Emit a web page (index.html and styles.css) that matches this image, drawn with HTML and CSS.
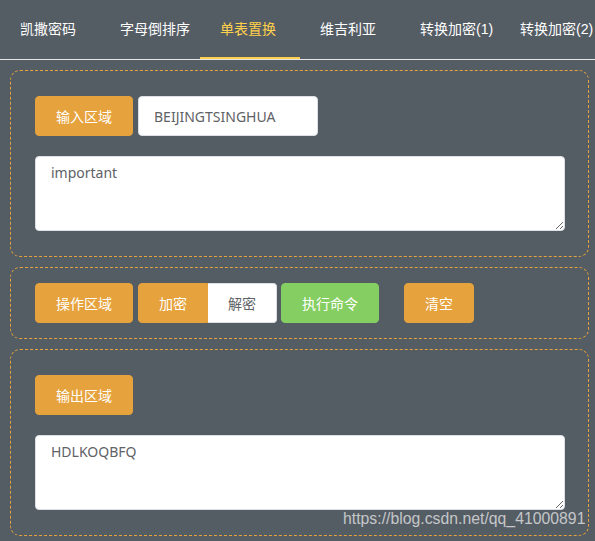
FILE: index.html
```html
<!DOCTYPE html>
<html lang="zh-CN">
<head>
<meta charset="utf-8">
<title>加密</title>
<link rel="stylesheet" href="styles.css">
</head>
<body>
<nav class="menu">
  <div class="tab">凯撒密码</div>
  <div class="tab">字母倒排序</div>
  <div class="tab active">单表置换</div>
  <div class="tab">维吉利亚</div>
  <div class="tab">转换加密(1)</div>
  <div class="tab">转换加密(2)</div>
</nav>
<main class="content">
  <section class="panel">
    <div class="row">
      <button class="btn btn-warning">输入区域</button>
      <input class="input key" type="text" value="BEIJINGTSINGHUA">
    </div>
    <textarea class="textarea">important</textarea>
  </section>
  <section class="panel panel-ops">
    <div class="row">
      <button class="btn btn-warning">操作区域</button>
      <div class="seg">
        <span class="seg-item seg-on">加密</span><span class="seg-item seg-off">解密</span>
      </div>
      <button class="btn btn-success">执行命令</button>
      <button class="btn btn-warning btn-clear">清空</button>
    </div>
  </section>
  <section class="panel">
    <div class="row">
      <button class="btn btn-warning">输出区域</button>
    </div>
    <textarea class="textarea">HDLKOQBFQ</textarea>
  </section>
</main>
<div class="watermark">https://blog.csdn.net/qq_41000891</div>
</body>
</html>
```

FILE: styles.css
```css
html, body {
  margin: 0;
  padding: 0;
  background: #545c64;
  width: 595px;
  height: 541px;
  overflow: hidden;
  font-family: "Liberation Sans", "Noto Sans CJK SC", sans-serif;
}

.menu {
  display: flex;
  height: 59px;
  border-bottom: 1px solid #e6e6e6;
  overflow: hidden;
}

.tab {
  flex: 0 0 100px;
  box-sizing: border-box;
  padding-left: 20px;
  height: 59px;
  line-height: 58px;
  font-size: 14px;
  color: #ffffff;
  white-space: nowrap;
}

.tab.active {
  color: #ffd04b;
  border-bottom: 2px solid #ffd04b;
}

.content {
  padding: 10px 6px 0 10px;
}

.panel {
  box-sizing: border-box;
  border: 1px dashed #e6a23c;
  border-radius: 10px;
  padding: 25px 23px 25px 24px;
  margin-bottom: 10px;
}

.panel-ops {
  padding-top: 15px;
  padding-bottom: 15px;
}

.row {
  display: flex;
  align-items: center;
}

.btn {
  box-sizing: border-box;
  height: 40px;
  padding: 0 20px;
  border-radius: 4px;
  font-family: "Noto Sans CJK SC", sans-serif;
  font-size: 14px;
  color: #ffffff;
  cursor: pointer;
}

.btn-warning {
  background: #e6a23c;
  border: 1px solid #e6a23c;
}

.btn-success {
  background: #85ce61;
  border: 1px solid #85ce61;
  margin-left: 4px;
}

.btn-clear {
  margin-left: 25px;
}

.input {
  box-sizing: border-box;
  width: 180px;
  height: 40px;
  margin-left: 5px;
  padding: 0 15px;
  border: 1px solid #dcdfe6;
  border-radius: 4px;
  background: #ffffff;
  color: #606266;
  font-family: "Noto Sans", "Noto Sans CJK SC", sans-serif;
  font-size: 14px;
  outline: none;
}

.textarea {
  display: block;
  box-sizing: border-box;
  width: 530px;
  height: 75px;
  margin-top: 20px;
  padding: 5px 15px;
  border: 1px solid #dcdfe6;
  border-radius: 4px;
  background: #ffffff;
  color: #606266;
  font-family: "Noto Sans", "Noto Sans CJK SC", sans-serif;
  font-size: 14px;
  line-height: 1.5;
  outline: none;
}

.seg {
  display: flex;
  margin-left: 5px;
}

.seg-item {
  box-sizing: border-box;
  height: 40px;
  line-height: 38px;
  padding: 0 20px;
  font-family: "Noto Sans CJK SC", sans-serif;
  font-size: 14px;
}

.seg-on {
  width: 70px;
  background: #e6a23c;
  border: 1px solid #e6a23c;
  color: #ffffff;
  border-radius: 4px 0 0 4px;
}

.seg-off {
  width: 69px;
  background: #ffffff;
  border: 1px solid #dcdfe6;
  border-left: none;
  color: #606266;
  border-radius: 0 4px 4px 0;
}

.watermark {
  position: absolute;
  left: 343px;
  top: 510px;
  font-family: "Liberation Sans", sans-serif;
  font-size: 15.8px;
  color: rgba(235, 235, 235, 0.75);
  white-space: nowrap;
}
```
